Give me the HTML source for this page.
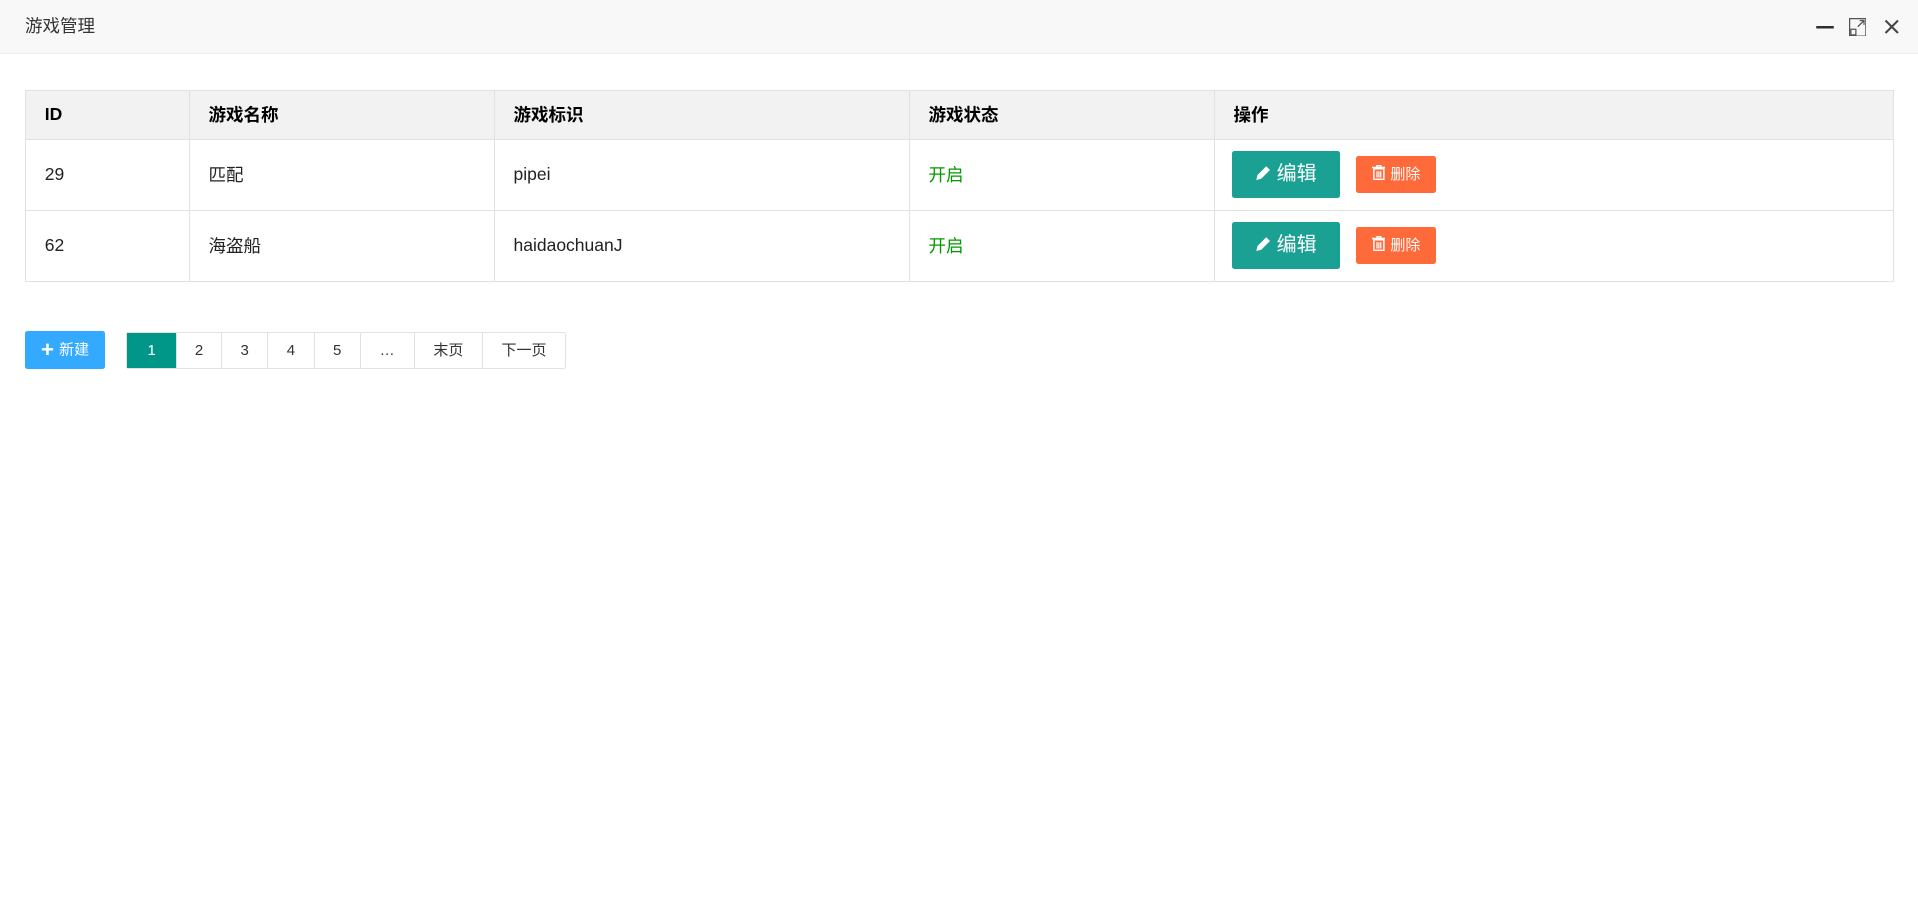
<!DOCTYPE html>
<html><head><meta charset="utf-8"><style>
html,body{margin:0;padding:0;background:#fff;width:1918px;height:918px;overflow:hidden}
#w{zoom:1.25;width:1534.4px;height:734.4px;font-family:"Liberation Sans","Noto Sans CJK SC",sans-serif;color:#333;font-size:14px;position:relative}
.hd{height:42px;background:#f8f8f8;border-bottom:1px solid #eee;line-height:42px;padding-left:20px;font-size:14px;color:#333;position:relative}
.ic{position:absolute;top:0}
table{position:absolute;left:20px;top:72px;width:1495px;border-collapse:collapse;table-layout:fixed}
th,td{border:1px solid #e2e2e2;text-align:left;padding:0 15px;font-size:14px}
th{background:#f2f2f2;height:38px;color:#000;font-weight:bold}
td{height:56px;color:#222}
.on{color:#009900}
.be{display:inline-block;width:86px;height:38px;line-height:38px;background:#1aa194;color:#fff;border-radius:2px;text-align:center;font-size:16px;vertical-align:middle;margin-left:-1px}
.bd{display:inline-block;width:64px;height:30px;line-height:30px;background:#ff6a3a;color:#fff;border-radius:2px;text-align:center;font-size:12px;vertical-align:middle;margin-left:13px}
.pg{position:absolute;top:265px;left:20px;height:30px;display:flex;align-items:center}
.nb{width:64px;height:30px;line-height:30px;background:#33aaff;color:#fff;border-radius:2px;text-align:center;font-size:12px;margin-right:17px}
.pp{display:flex;border:1px solid #e2e2e2;border-radius:2px;height:28px}
.pp span{display:inline-block;box-sizing:border-box;height:28px;line-height:28px;border-left:1px solid #e2e2e2;font-size:12px;color:#333;text-align:center;width:37px}
.pp span:first-child{border-left:none;background:#009688;color:#fff;width:39px}
.pp span.t{width:36px}.pp span.e{width:43px}.pp span.m{width:55px}.pp span.n{width:66px}
</style></head><body><div id="w">
<div class="hd">游戏管理
<svg class="ic" style="left:1452px;top:13px" width="16" height="16"><line x1="1" y1="9" x2="15" y2="9" stroke="#2e2e2e" stroke-width="2"/></svg>
<svg class="ic" style="left:1479px;top:14px" width="14" height="15"><rect x="0.5" y="0.5" width="13" height="14" fill="none" stroke="#555" stroke-width="1"/><rect x="1.5" y="9" width="4" height="4.5" fill="none" stroke="#555"/><path d="M7 7L12 2M8.5 2H12V5.5" fill="none" stroke="#555"/></svg>
<svg class="ic" style="left:1506px;top:14px" width="14" height="14"><path d="M2 2L12 12M12 2L2 12" stroke="#444" stroke-width="1.6"/></svg>
</div>
<table>
<colgroup><col style="width:131px"><col style="width:244px"><col style="width:332px"><col style="width:244px"><col></colgroup>
<tr><th>ID</th><th>游戏名称</th><th>游戏标识</th><th>游戏状态</th><th>操作</th></tr>
<tr><td>29</td><td>匹配</td><td>pipei</td><td class="on">开启</td><td><span class="be"><svg width="13" height="13" style="vertical-align:-1px;margin-right:4px"><path d="M1 12L2 8L9 1L12 4L5 11Z" fill="#fff"/></svg>编辑</span><span class="bd"><svg width="11" height="12" style="vertical-align:-1px;margin-right:4px"><path d="M0 2H11M4 2V0.5H7V2M1.5 3H9.5V11.5H1.5Z" fill="none" stroke="#fff" stroke-width="1.2"/><path d="M4 5V10M5.5 5V10M7 5V10" stroke="#fff"/></svg>删除</span></td></tr>
<tr><td>62</td><td>海盗船</td><td>haidaochuanJ</td><td class="on">开启</td><td><span class="be"><svg width="13" height="13" style="vertical-align:-1px;margin-right:4px"><path d="M1 12L2 8L9 1L12 4L5 11Z" fill="#fff"/></svg>编辑</span><span class="bd"><svg width="11" height="12" style="vertical-align:-1px;margin-right:4px"><path d="M0 2H11M4 2V0.5H7V2M1.5 3H9.5V11.5H1.5Z" fill="none" stroke="#fff" stroke-width="1.2"/><path d="M4 5V10M5.5 5V10M7 5V10" stroke="#fff"/></svg>删除</span></td></tr>
</table>
<div class="pg"><div class="nb"><span style="font-size:18px;vertical-align:-2px;margin-right:4px;font-weight:bold">+</span>新建</div>
<div class="pp"><span>1</span><span class="t">2</span><span>3</span><span>4</span><span>5</span><span class="e">…</span><span class="m">末页</span><span class="n">下一页</span></div></div>
</div></body></html>
